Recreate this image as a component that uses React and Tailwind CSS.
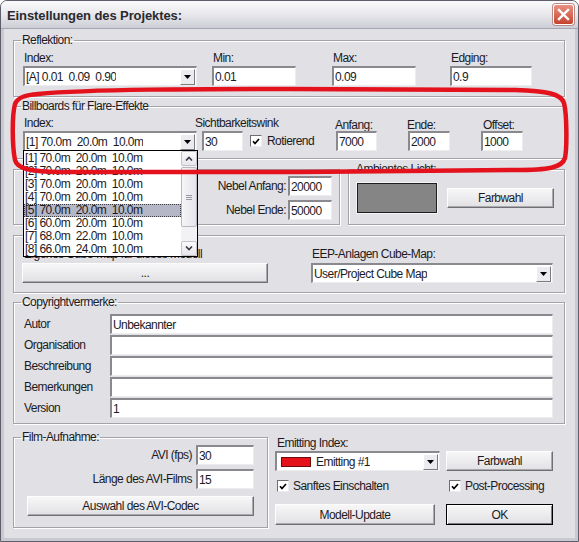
import React from 'react';

/* ---------- kleine Win-XP Bausteine ---------- */

function Sunken({ className = '', children }) {
  return (
    <div className={`flex items-center bg-white border-t-2 border-l-2 border-r border-b border-t-[#8a8a8e] border-l-[#8a8a8e] border-r-[#ededf0] border-b-[#ededf0] ${className}`}>
      {children}
    </div>
  );
}

function Field({ className = '', children }) {
  return (
    <Sunken className={`h-[20px] ${className}`}>
      <span className="pl-[1px] whitespace-pre">{children}</span>
    </Sunken>
  );
}

function DropBtn() {
  return (
    <div className="mr-[1px] flex h-[16px] w-[15px] shrink-0 items-center justify-center bg-[#ecebef] border border-t-white border-l-white border-r-[#7c7c80] border-b-[#7c7c80]">
      <svg width="7" height="4" viewBox="0 0 7 4"><path d="M0 0h7L3.5 4z" fill="#000" /></svg>
    </div>
  );
}

function Combo({ className = '', children }) {
  return (
    <Sunken className={`h-[20px] justify-between ${className}`}>
      <div className="flex min-w-0 items-center overflow-hidden whitespace-pre pl-[1px]">{children}</div>
      <DropBtn />
    </Sunken>
  );
}

function Btn({ className = '', def = false, children }) {
  const edge = def
    ? 'border border-black shadow-[inset_1px_1px_0_#fff,inset_-1px_-1px_0_#7c7c80]'
    : 'border border-t-[#fdfdfd] border-l-[#fdfdfd] border-r-[#6f6f74] border-b-[#6f6f74] shadow-[inset_-1px_-1px_0_#a9a9ae]';
  return (
    <div className={`flex items-center justify-center bg-linear-to-b from-[#f7f7f8] to-[#e1e1e4] ${edge} ${className}`}>
      {children}
    </div>
  );
}

function Check() {
  return (
    <div className="flex h-[12px] w-[12px] shrink-0 items-center justify-center bg-white border border-t-[#6e6e72] border-l-[#6e6e72] border-r-[#ececef] border-b-[#ececef]">
      <svg width="8" height="7" viewBox="0 0 8 7"><path d="M1 3.3l2 2.2L7 1" stroke="#000" strokeWidth="1.7" fill="none" /></svg>
    </div>
  );
}

function Group({ legend, legendClass = '-ml-[2px]', className = '', children }) {
  return (
    <fieldset className={`border border-[#a2a2a8] shadow-[inset_1px_1px_0_#fff,1px_1px_0_#fff] ${className}`}>
      {legend && <legend className={`px-[1px] leading-[14px] ${legendClass}`}>{legend}</legend>}
      {children}
    </fieldset>
  );
}

function Col({ label, className = '', children }) {
  return (
    <div className={`flex flex-col ${className}`}>
      <span className="pl-[1px]">{label}</span>
      <div className="mt-[1px]">{children}</div>
    </div>
  );
}

function CloseBtn() {
  return (
    <div className="flex h-[21px] w-[21px] items-center justify-center rounded-[3px] border border-white bg-linear-to-b from-[#e99182] to-[#c4412f] shadow-[0_0_0_1px_#b98a86]">
      <svg width="13" height="13" viewBox="0 0 13 13">
        <path d="M2 2l9 9M11 2l-9 9" stroke="#fff" strokeWidth="2.4" strokeLinecap="square" />
      </svg>
    </div>
  );
}

/* ---------- geöffnete Liste der Billboards ---------- */

const billboards = [
  '[1] 70.0m  20.0m  10.0m',
  '[2] 70.0m  20.0m  10.0m',
  '[3] 70.0m  20.0m  10.0m',
  '[4] 70.0m  20.0m  10.0m',
  '[5] 70.0m  20.0m  10.0m',
  '[6] 60.0m  20.0m  10.0m',
  '[7] 68.0m  22.0m  10.0m',
  '[8] 66.0m  24.0m  10.0m',
];

function ScrollBtn({ up = false }) {
  return (
    <div className="flex h-[15px] items-center justify-center rounded-[2px] border border-[#c3c3cc] bg-linear-to-b from-[#fbfbfc] to-[#e6e6ec]">
      <svg width="8" height="5" viewBox="0 0 8 5">
        <path d={up ? 'M1 4.5L4 1.5l3 3' : 'M1 0.5l3 3 3-3'} stroke="#3a3a44" strokeWidth="1.6" fill="none" />
      </svg>
    </div>
  );
}

function OpenList() {
  return (
    <div className="absolute left-[22px] top-[149px] flex h-[107px] w-[175px] border border-black bg-white">
      <div className="flex-1 pt-[1px]">
        {billboards.map((b, i) => (
          <div
            key={b + i}
            className={`h-[13px] pl-[1px] leading-[13px] whitespace-pre ${i === 4 ? 'bg-[#b5b6c6] outline-1 outline-dotted outline-[#3c3c44] -outline-offset-1' : ''}`}
          >
            {b}
          </div>
        ))}
      </div>
      <div className="flex w-[16px] flex-col bg-[#f2f2f5]">
        <ScrollBtn up />
        <div className="flex-1 pt-[1px]">
          <div className="flex h-[60px] flex-col items-center justify-center gap-[1px] rounded-[2px] border border-[#b8b8c4] bg-linear-to-r from-[#f6f6f8] to-[#e3e3ea]">
            <div className="h-[1px] w-[6px] bg-[#9a9aa6]" />
            <div className="h-[1px] w-[6px] bg-[#9a9aa6]" />
            <div className="h-[1px] w-[6px] bg-[#9a9aa6]" />
          </div>
        </div>
        <ScrollBtn />
      </div>
    </div>
  );
}

/* rote Markierung, über den Screenshot gemalt */
function RedMark() {
  return (
    <svg className="pointer-events-none absolute -left-[1px] -top-[1px]" width="579" height="542" viewBox="0 0 579 542">
      <path
        d="M38 94 C90 89 200 89 290 89 L515 90 C548 91 561 94 564 103 C567 115 567 148 565 158 C562 168 548 170 515 170 L300 172 L60 172 C32 172 17 169 15 160 C12 145 12 115 15 104 C18 97 26 95 38 94 Z"
        fill="none"
        stroke="#e3121c"
        strokeWidth="4.5"
        strokeLinejoin="round"
      />
    </svg>
  );
}

/* ---------- Dialog ---------- */

export default function App() {
  const copyright = [
    ['Autor', 'Unbekannter'],
    ['Organisation', ''],
    ['Beschreibung', ''],
    ['Bemerkungen', ''],
    ['Version', '1'],
  ];

  return (
    <div className="relative flex h-[542px] w-[579px] flex-col overflow-hidden rounded-t-[7px] border border-[#5e5e6a] bg-[#e1e0e5] font-['Liberation_Sans',Arial,sans-serif] text-[12px] leading-[14px] tracking-[-0.55px] text-[#1b1b1f]">
      {/* Titelleiste */}
      <div className="flex h-[28px] shrink-0 items-center justify-between border-b border-[#a5a5b1] bg-linear-to-b from-[#fbfbfc] via-[#e8e8ec] to-[#cdcdd6] pl-[6px] pr-[4px]">
        <span className="mt-[2px] text-[13px] font-bold tracking-[-0.1px] text-[#2a2a2e]">Einstellungen des Projektes:</span>
        <CloseBtn />
      </div>

      <div className="flex flex-1 flex-col border-x-[3px] border-b-[3px] border-[#c9c9d3] pl-[9px] pr-[10px]">
        {/* Reflektion */}
        <Group legend="Reflektion:" className="mt-[4px] pl-[9px] pt-[4px] pb-[10px]">
          <div className="flex">
            <Col label="Index:" className="w-[174px]">
              <Combo>[A] 0.01  0.09  0.90</Combo>
            </Col>
            <Col label="Min:" className="ml-[15px]">
              <Field className="w-[84px]">0.01</Field>
            </Col>
            <Col label="Max:" className="ml-[36px]">
              <Field className="w-[84px]">0.09</Field>
            </Col>
            <Col label="Edging:" className="ml-[34px]">
              <Field className="w-[82px]">0.9</Field>
            </Col>
          </div>
        </Group>

        {/* Billboards */}
        <Group legend="Billboards für Flare-Effekte" className="mt-[2px] pl-[9px] pt-[3px] pb-[7px]">
          <div className="flex items-end">
            <Col label="Index:" className="w-[174px]">
              <Combo>[1] 70.0m  20.0m  10.0m</Combo>
            </Col>
            <div className="-ml-[2px] flex w-[140px] flex-col">
              <span>Sichtbarkeitswink</span>
              <div className="mt-[1px] flex items-center">
                <Field className="ml-[7px] w-[41px]">30</Field>
                <div className="ml-[7px]"><Check /></div>
                <span className="ml-[5px]">Rotierend</span>
              </div>
            </div>
            <div className="flex w-[72px] flex-col">
              <span className="leading-[11px]">Anfang:</span>
              <Field className="ml-[1px] w-[41px]">7000</Field>
            </div>
            <div className="flex w-[74px] flex-col">
              <span className="leading-[11px]">Ende:</span>
              <Field className="ml-[1px] w-[42px]">2000</Field>
            </div>
            <div className="flex flex-col">
              <span className="ml-[2px] leading-[11px]">Offset:</span>
              <Field className="w-[42px]">1000</Field>
            </div>
          </div>
        </Group>

        {/* Nebel + Ambientes Licht */}
        <div className="mt-[3px] flex items-start">
          <Group className="mt-[7px] flex w-[327px] flex-col items-end gap-[4px] pt-[6px] pb-[4px] pr-[7px]">
            <div className="flex items-center">
              <span>Nebel Anfang:</span>
              <Field className="ml-[2px] w-[44px]">20000</Field>
            </div>
            <div className="flex items-center">
              <span>Nebel Ende:</span>
              <Field className="ml-[2px] w-[44px]">50000</Field>
            </div>
          </Group>
          <Group legend="Ambientes Licht:" className="ml-[8px] w-[217px] pl-[8px] pt-[7px] pb-[11px]">
            <div className="flex items-center">
              <div className="h-[30px] w-[80px] border border-[#1e1e1e] bg-[#858585] shadow-[0_0_0_1px_#f4f4f4]" />
              <Btn className="ml-[10px] h-[20px] w-[107px]">Farbwahl</Btn>
            </div>
          </Group>
        </div>

        {/* Cube-Map */}
        <Group className="mt-[10px] pl-[8px] pt-[11px] pb-[9px]">
          <div className="flex items-end">
            <div className="flex w-[246px] flex-col">
              <span className="pl-[2px]">Eigenes Cube-Map für dieses Modell</span>
              <Btn className="mt-[2px] h-[20px]">...</Btn>
            </div>
            <div className="ml-[43px] flex flex-col">
              <span className="pl-[1px]">EEP-Anlagen Cube-Map:</span>
              <Combo className="mt-[2px] w-[242px]">User/Project Cube Map</Combo>
            </div>
          </div>
        </Group>

        {/* Copyright */}
        <Group legend="Copyrightvermerke:" legendClass="-ml-[3px]" className="mt-[2px] flex flex-col gap-[1px] pl-[10px] pr-[11px] pt-[5px] pb-[5px]">
          {copyright.map(([label, value]) => (
            <div key={label} className="flex items-center">
              <span className="w-[86px] shrink-0">{label}</span>
              <Field className="flex-1">{value}</Field>
            </div>
          ))}
        </Group>

        {/* unten */}
        <div className="mt-[6px] flex items-start">
          <Group legend="Film-Aufnahme:" legendClass="-ml-[6px]" className="flex w-[255px] flex-col px-[13px] pt-[1px] pb-[11px]">
            <div className="flex items-center justify-end">
              <span>AVI (fps)</span>
              <Field className="ml-[4px] w-[58px]">30</Field>
            </div>
            <div className="mt-[4px] flex items-center justify-end">
              <span>Länge des AVI-Films</span>
              <Field className="ml-[4px] w-[58px]">15</Field>
            </div>
            <Btn className="mt-[7px] h-[20px]">Auswahl des AVI-Codec</Btn>
          </Group>

          <div className="ml-[7px] mt-[6px] flex w-[278px] flex-col">
            <span className="pl-[2px]">Emitting Index:</span>
            <div className="mt-[1px] flex">
              <Combo className="w-[165px]">
                <div className="ml-[3px] h-[10px] w-[30px] border border-[#6d0a0a] bg-[#e5121a]" />
                <span className="ml-[5px]">Emitting #1</span>
              </Combo>
              <Btn className="ml-[6px] h-[20px] w-[107px]">Farbwahl</Btn>
            </div>
            <div className="mt-[7px] flex h-[16px] items-center">
              <div className="flex w-[171px] items-center pl-[2px]">
                <Check />
                <span className="ml-[4px]">Sanftes Einschalten</span>
              </div>
              <div className="flex items-center pl-[3px]">
                <Check />
                <span className="ml-[4px]">Post-Processing</span>
              </div>
            </div>
            <div className="mt-[10px] flex">
              <Btn className="h-[21px] w-[160px]">Modell-Update</Btn>
              <Btn def className="ml-[11px] h-[21px] w-[107px]">OK</Btn>
            </div>
          </div>
        </div>
      </div>

      <OpenList />
      <RedMark />
    </div>
  );
}
